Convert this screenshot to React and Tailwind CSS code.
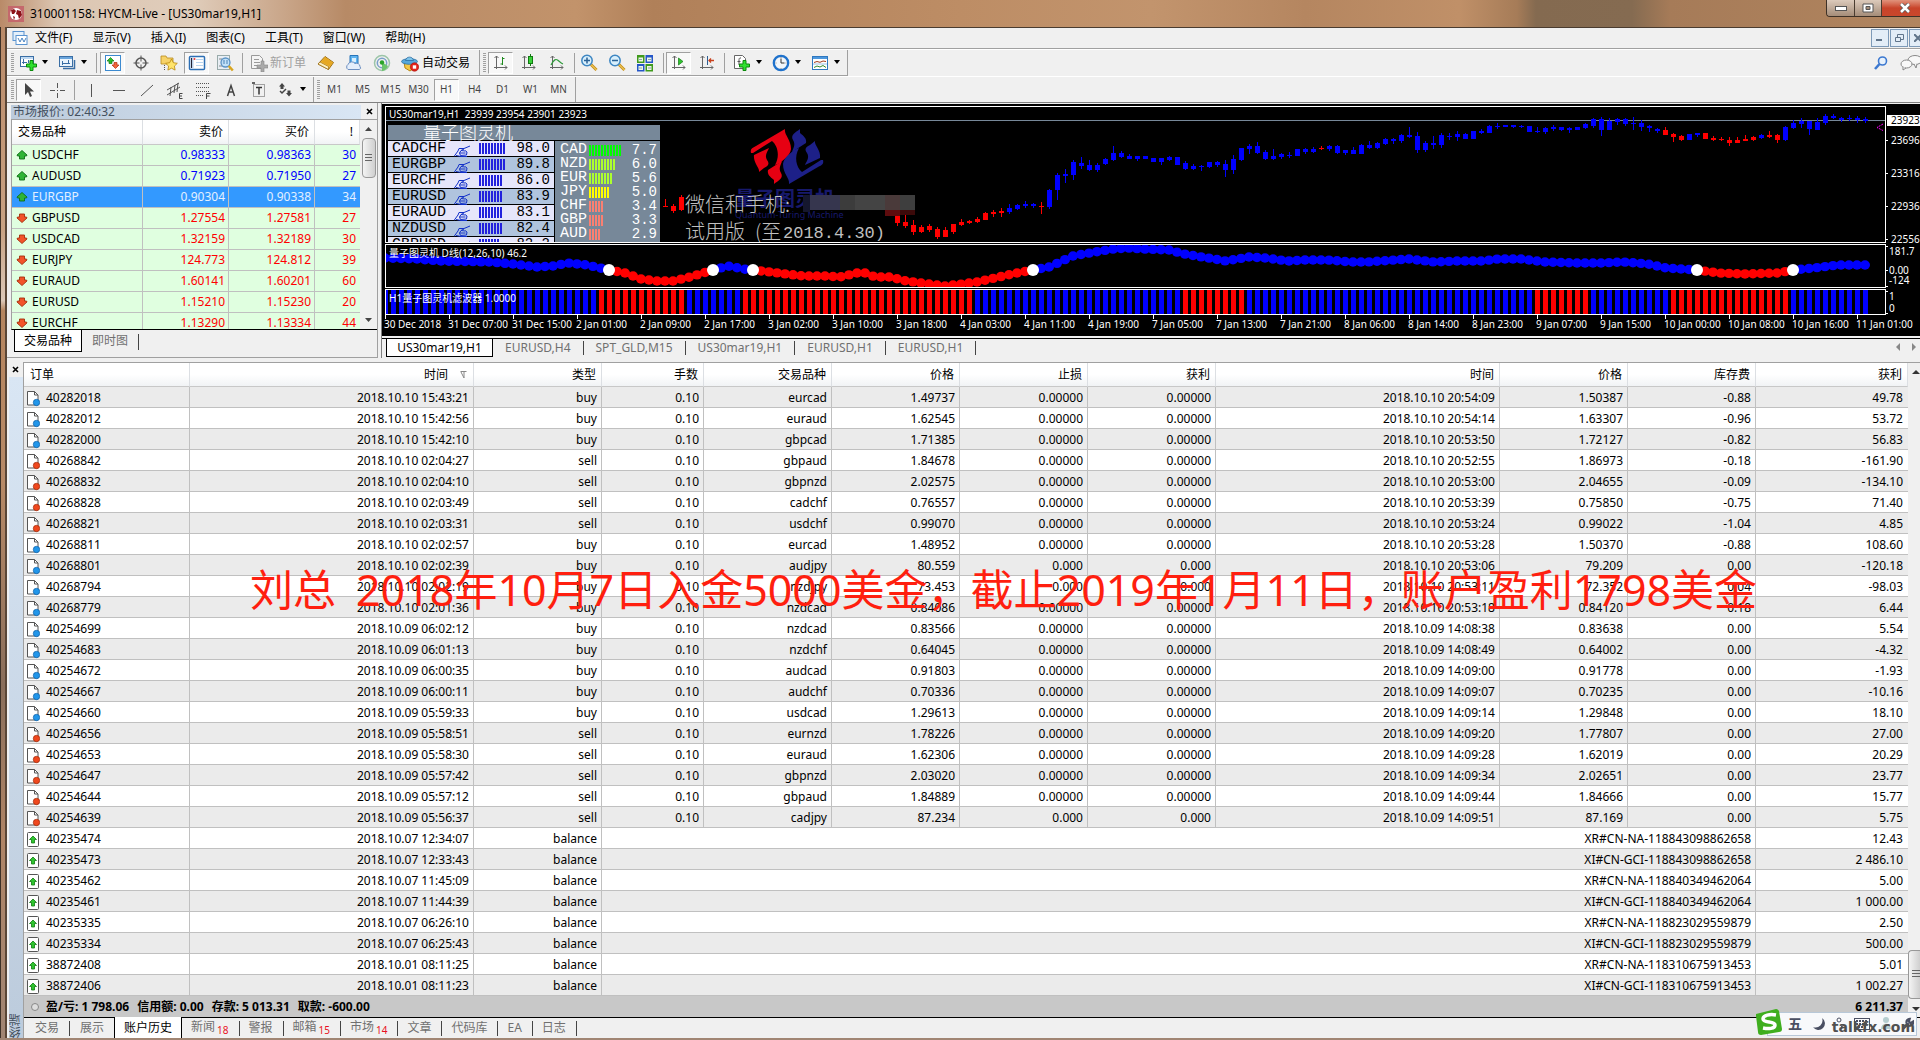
import React from "react";

const UI = "font-['Noto_Sans','Noto_Sans_CJK_SC',sans-serif]";

/* ---------- data ---------- */

const QUOTES = [
  ["USDCHF", "0.98333", "0.98363", "30", "up"],
  ["AUDUSD", "0.71923", "0.71950", "27", "up"],
  ["EURGBP", "0.90304", "0.90338", "34", "sel"],
  ["GBPUSD", "1.27554", "1.27581", "27", "down"],
  ["USDCAD", "1.32159", "1.32189", "30", "down"],
  ["EURJPY", "124.773", "124.812", "39", "down"],
  ["EURAUD", "1.60141", "1.60201", "60", "down"],
  ["EURUSD", "1.15210", "1.15230", "20", "down"],
  ["EURCHF", "1.13290", "1.13334", "44", "down"],
];

const TRADES = `40282018|2018.10.10 15:43:21|buy|eurcad|1.49737|0.00000|2018.10.10 20:54:09|1.50387|-0.88|49.78
40282012|2018.10.10 15:42:56|buy|euraud|1.62545|0.00000|2018.10.10 20:54:14|1.63307|-0.96|53.72
40282000|2018.10.10 15:42:10|buy|gbpcad|1.71385|0.00000|2018.10.10 20:53:50|1.72127|-0.82|56.83
40268842|2018.10.10 02:04:27|sell|gbpaud|1.84678|0.00000|2018.10.10 20:52:55|1.86973|-0.18|-161.90
40268832|2018.10.10 02:04:10|sell|gbpnzd|2.02575|0.00000|2018.10.10 20:53:00|2.04655|-0.09|-134.10
40268828|2018.10.10 02:03:49|sell|cadchf|0.76557|0.00000|2018.10.10 20:53:39|0.75850|-0.75|71.40
40268821|2018.10.10 02:03:31|sell|usdchf|0.99070|0.00000|2018.10.10 20:53:24|0.99022|-1.04|4.85
40268811|2018.10.10 02:02:57|buy|eurcad|1.48952|0.00000|2018.10.10 20:53:28|1.50370|-0.88|108.60
40268801|2018.10.10 02:02:39|buy|audjpy|80.559|0.000|2018.10.10 20:53:06|79.209|0.00|-120.18
40268794|2018.10.10 02:02:19|buy|nzdjpy|73.453|0.000|2018.10.10 20:53:11|72.352|0.04|-98.03
40268779|2018.10.10 02:01:36|buy|nzdcad|0.84086|0.00000|2018.10.10 20:53:18|0.84120|0.18|6.44
40254699|2018.10.09 06:02:12|buy|nzdcad|0.83566|0.00000|2018.10.09 14:08:38|0.83638|0.00|5.54
40254683|2018.10.09 06:01:13|buy|nzdchf|0.64045|0.00000|2018.10.09 14:08:49|0.64002|0.00|-4.32
40254672|2018.10.09 06:00:35|buy|audcad|0.91803|0.00000|2018.10.09 14:09:00|0.91778|0.00|-1.93
40254667|2018.10.09 06:00:11|buy|audchf|0.70336|0.00000|2018.10.09 14:09:07|0.70235|0.00|-10.16
40254660|2018.10.09 05:59:33|buy|usdcad|1.29613|0.00000|2018.10.09 14:09:14|1.29848|0.00|18.10
40254656|2018.10.09 05:58:51|sell|eurnzd|1.78226|0.00000|2018.10.09 14:09:20|1.77807|0.00|27.00
40254653|2018.10.09 05:58:30|sell|euraud|1.62306|0.00000|2018.10.09 14:09:28|1.62019|0.00|20.29
40254647|2018.10.09 05:57:42|sell|gbpnzd|2.03020|0.00000|2018.10.09 14:09:34|2.02651|0.00|23.77
40254644|2018.10.09 05:57:12|sell|gbpaud|1.84889|0.00000|2018.10.09 14:09:44|1.84666|0.00|15.77
40254639|2018.10.09 05:56:37|sell|cadjpy|87.234|0.000|2018.10.09 14:09:51|87.169|0.00|5.75`
  .split("\n")
  .map((l) => l.split("|"));

const BALANCES = [
  ["40235474", "2018.10.07 12:34:07", "XR#CN-NA-118843098862658", "12.43"],
  ["40235473", "2018.10.07 12:33:43", "XI#CN-GCI-118843098862658", "2 486.10"],
  ["40235462", "2018.10.07 11:45:09", "XR#CN-NA-118840349462064", "5.00"],
  ["40235461", "2018.10.07 11:44:39", "XI#CN-GCI-118840349462064", "1 000.00"],
  ["40235335", "2018.10.07 06:26:10", "XR#CN-NA-118823029559879", "2.50"],
  ["40235334", "2018.10.07 06:25:43", "XI#CN-GCI-118823029559879", "500.00"],
  ["38872408", "2018.10.01 08:11:25", "XR#CN-NA-118310675913453", "5.01"],
  ["38872406", "2018.10.01 08:11:23", "XI#CN-GCI-118310675913453", "1 002.27"],
];

/* candles: [body top, body bottom, wick top, wick bottom, colour] in thirds of a pixel */
const CANDLES = [
  [647, 669, 647, 678, "r"], [665, 678, 645, 684, "r"], [674, 696, 660, 704, "r"], [681, 696, 674, 699, "r"],
  [678, 690, 672, 696, "r"], [687, 711, 681, 717, "r"], [690, 711, 681, 711, "r"], [672, 696, 672, 702, "r"],
  [666, 675, 657, 678, "r"], [663, 669, 660, 672, "r"], [657, 666, 651, 669, "r"], [639, 660, 635, 660, "r"],
  [636, 642, 629, 651, "r"], [633, 639, 624, 651, "r"], [624, 636, 612, 642], [615, 627, 612, 629],
  [612, 618, 603, 624], [612, 618, 609, 624], [618, 621, 606, 642, "r"], [569, 621, 567, 627],
  [525, 569, 519, 599], [522, 528, 507, 549], [486, 525, 480, 539], [489, 498, 471, 507],
  [495, 510, 480, 513], [495, 510, 489, 516], [477, 492, 474, 495], [459, 480, 437, 484],
  [459, 471, 453, 474], [468, 477, 462, 477], [468, 477, 468, 483], [468, 477, 468, 477],
  [474, 486, 474, 486], [474, 486, 474, 495], [471, 480, 468, 483], [471, 495, 471, 495],
  [489, 507, 483, 510], [498, 507, 492, 510], [497, 500, 495, 513], [486, 501, 486, 504],
  [486, 495, 483, 501], [492, 510, 480, 531], [477, 510, 465, 522], [444, 480, 444, 483],
  [438, 447, 432, 462], [438, 459, 426, 462], [456, 477, 450, 480], [468, 477, 447, 480],
  [462, 471, 459, 477], [465, 468, 456, 474], [447, 468, 447, 468], [447, 456, 444, 462],
  [447, 456, 441, 459], [444, 447, 438, 450, "r"], [438, 447, 435, 453], [438, 459, 435, 462],
  [450, 459, 450, 465], [450, 462, 441, 462], [435, 462, 432, 462], [435, 444, 423, 447],
  [429, 444, 426, 447], [417, 432, 414, 435], [417, 423, 414, 432], [405, 423, 402, 429],
  [405, 411, 381, 414], [408, 450, 396, 459], [429, 450, 423, 456], [429, 435, 408, 447],
  [405, 435, 399, 444], [408, 411, 399, 420], [402, 411, 393, 423], [402, 417, 399, 417],
  [393, 417, 393, 417], [393, 399, 387, 402], [378, 399, 375, 399], [378, 381, 369, 387],
  [375, 381, 375, 381], [375, 381, 375, 384], [378, 381, 375, 384], [378, 396, 378, 396],
  [393, 396, 381, 399], [384, 396, 381, 402], [381, 387, 375, 393], [381, 390, 381, 393],
  [384, 390, 381, 399], [381, 390, 381, 390], [372, 384, 369, 387], [357, 378, 354, 384],
  [357, 390, 351, 408], [363, 390, 354, 390], [357, 366, 354, 375], [357, 372, 354, 378],
  [369, 372, 351, 390], [369, 381, 360, 393], [378, 384, 375, 396], [387, 393, 384, 399],
  [390, 405, 381, 405, "r"], [402, 411, 399, 426, "r"], [408, 420, 405, 423, "r"], [402, 420, 402, 420],
  [399, 405, 399, 411], [399, 417, 399, 417, "r"], [414, 420, 408, 423, "r"], [417, 420, 411, 423, "r"],
  [420, 429, 411, 438, "r"], [420, 429, 411, 429, "r"], [417, 423, 405, 423, "r"], [411, 420, 408, 423, "r"],
  [405, 414, 402, 417], [405, 411, 393, 414, "r"], [405, 420, 402, 429, "r"], [381, 420, 378, 423],
  [369, 384, 360, 387], [363, 372, 354, 384], [363, 387, 363, 405], [366, 390, 354, 390],
  [348, 369, 342, 375], [348, 354, 342, 357], [354, 360, 351, 366], [354, 357, 345, 363],
  [354, 360, 348, 369], [357, 363, 351, 369],
];

const CURVE = [
  [385, 258], [417, 259], [440, 261], [490, 262], [513, 264], [537, 267], [553, 266], [568, 263], [587, 265],
  [609, 270], [625, 273], [641, 279], [657, 281], [673, 281], [690, 277], [713, 270], [728, 266], [743, 269],
  [753, 270], [770, 272], [786, 274], [803, 276], [825, 276], [840, 277], [857, 273], [866, 273], [875, 277],
  [890, 277], [906, 281], [929, 284], [945, 286], [962, 284], [977, 282], [999, 277], [1017, 273], [1033, 270],
  [1049, 267], [1073, 256], [1095, 252], [1114, 249], [1128, 248], [1143, 249], [1169, 250], [1184, 254],
  [1202, 257], [1226, 261], [1249, 257], [1265, 258], [1288, 261], [1305, 260], [1328, 260], [1351, 262],
  [1367, 262], [1409, 259], [1434, 262], [1458, 261], [1482, 261], [1498, 259], [1521, 259], [1545, 262],
  [1577, 263], [1600, 263], [1624, 262], [1648, 264], [1666, 268], [1697, 270], [1719, 273], [1743, 274],
  [1778, 273], [1793, 270], [1814, 268], [1838, 265], [1866, 265],
];
const curveY = (x) => {
  for (let i = 1; i < CURVE.length; i++) {
    const [x0, y0] = CURVE[i - 1];
    const [x1, y1] = CURVE[i];
    if (x <= x1) return y0 + ((y1 - y0) * (x - x0)) / (x1 - x0);
  }
  return 265;
};
const SLOTS = Array.from({ length: 186 }, (_, i) => 385 + i * 8);
const within = (x, ranges) => ranges.some(([a, b]) => x >= a && x <= b);
const DOT_RED = [[610, 712], [754, 1032], [1698, 1792]];
const BAR_RED = [[601, 681], [745, 969], [1185, 1241], [1537, 1585], [1673, 1785]];
const TURNS = [609, 713, 753, 1033, 1697, 1793];
const DATES = [
  "30 Dec 2018", "31 Dec 07:00", "31 Dec 15:00", "2 Jan 01:00", "2 Jan 09:00", "2 Jan 17:00", "3 Jan 02:00",
  "3 Jan 10:00", "3 Jan 18:00", "4 Jan 03:00", "4 Jan 11:00", "4 Jan 19:00", "7 Jan 05:00", "7 Jan 13:00",
  "7 Jan 21:00", "8 Jan 06:00", "8 Jan 14:00", "8 Jan 23:00", "9 Jan 07:00", "9 Jan 15:00", "10 Jan 00:00",
  "10 Jan 08:00", "10 Jan 16:00", "11 Jan 01:00",
];

const PAIRS = [
  ["CADCHF", "98.0", 9], ["EURGBP", "89.8", 9], ["EURCHF", "86.0", 8], ["EURUSD", "83.9", 8],
  ["EURAUD", "83.1", 8], ["NZDUSD", "82.4", 8], ["GBPUSD", "82.2", 7],
];
const POWERS = [
  ["CAD", "7.7", 11, "bg-[#00ff00]"], ["NZD", "6.0", 9, "bg-[#adff2f]"], ["EUR", "5.6", 8, "bg-[#adff2f]"],
  ["JPY", "5.0", 7, "bg-[#ffff00]"], ["CHF", "3.4", 5, "bg-[#fa8072]"], ["GBP", "3.3", 5, "bg-[#fa8072]"],
  ["AUD", "2.9", 4, "bg-[#fa8072]"],
];

/* ---------- icons ---------- */

const Svg = ({ children, w = 18, h = 18, box }) => (
  <svg width={w} height={h} viewBox={box || `0 0 ${w} ${h}`} className="shrink-0" aria-hidden="true" fill="none">
    {children}
  </svg>
);
const Plus = ({ x, y }) => (
  <path
    transform={`translate(${x} ${y})`}
    d="M4 .5h3v3.500h3.500v3H7v3.500H4V7H.5V4H4z"
    fill="#2ee02e"
    stroke="#0a8a0a"
  />
);
const Axes = () => <path d="M4.500 2v13M2 13.500h13M2.500 4l2-2 2 2M13 11.500l2 2-2 2" stroke="#666" />;

const IconNewChart = () => (
  <Svg>
    <rect x="1.500" y="2.500" width="13" height="10" fill="#fff" stroke="#3a6ea5" />
    <path d="M2 4h12" stroke="#7fb2e5" />
    <path d="M4.500 5v5M3 8.500h5M9.500 6v3" stroke="#3a6ea5" />
    <Plus x={7} y={6} />
  </Svg>
);
const IconProfiles = () => (
  <Svg>
    <path d="M5 14.500h11.500V6" stroke="#3a6ea5" strokeWidth="1.500" />
    <rect x="1.500" y="2.500" width="13" height="10" fill="#eaf4fd" stroke="#3a6ea5" />
    <path d="M2 4h12" stroke="#6aa5dc" strokeWidth="2" />
    <path d="M4 9.500h8M4.500 7v4M10.500 6v4" stroke="#3a6ea5" />
  </Svg>
);
const IconMarket = () => (
  <Svg>
    <rect x="1.500" y="1.500" width="15" height="15" fill="#fff" stroke="#3c8ad0" />
    <path d="M3 7l3.500-3.500L10 7H8v2.500H5V7z" fill="#2bbd2b" stroke="#127a12" strokeWidth=".7" />
    <path d="M8 11l3.500 3.500L15 11h-2V8.500h-3V11z" fill="#f2663a" stroke="#b32c08" strokeWidth=".7" />
  </Svg>
);
const IconTarget = () => (
  <Svg>
    <circle cx="9" cy="9" r="5" stroke="#555" strokeWidth="1.500" />
    <path d="M9 1.500v6M9 10.500v6M1.500 9h6M10.500 9h6" stroke="#555" />
  </Svg>
);
const IconFavorites = () => (
  <Svg>
    <path d="M1 2h5l1 2h6v6H1z" fill="#f7d368" stroke="#b88a1d" strokeWidth=".8" />
    <path d="M4.500 11v6" stroke="#555" strokeDasharray="1 1" />
    <path d="M11.500 5l1.800 3.700 4 .6-2.900 2.800.7 4-3.600-1.900-3.600 1.900.7-4-2.900-2.800 4-.6z" fill="#ffe46b" stroke="#b8860b" strokeWidth=".8" />
  </Svg>
);
const IconNavigator = () => (
  <Svg>
    <rect x="1.500" y="2.500" width="15" height="13" rx="1" fill="#fff" stroke="#2d6fb5" strokeWidth="1.500" />
    <rect x="2.500" y="3.500" width="3" height="11" fill="#b9cfe8" />
    <path d="M3.500 4v10" stroke="#223" />
    <path d="M8 5.500h7M8 8.500h7M8 11.500h7" stroke="#b8d4ee" />
    <circle cx="6.500" cy="5" r="1" fill="#e33" />
  </Svg>
);
const IconTester = () => (
  <Svg>
    <rect x="1.500" y="1.500" width="12" height="14" fill="#e8eef4" stroke="#9aa" />
    <path d="M3 5h3v6M8 4v4M3 12h4" stroke="#888" />
    <circle cx="9.500" cy="8.500" r="4.500" fill="#bfe0fa" fillOpacity=".9" stroke="#5b93c5" strokeWidth="1.300" />
    <path d="M8 6v4M11 6v4" stroke="#4b83b5" />
    <path d="M12.800 12l4 4.500" stroke="#d8a520" strokeWidth="2.500" />
  </Svg>
);
const IconOrder = () => (
  <Svg>
    <path d="M1.500 1.500h8l3 3v10h-11z" fill="#f4f4f4" stroke="#999" />
    <path d="M4 5.500h5M4 8.500h6M4 11.500h3" stroke="#999" />
    <path d="M11 7h3v4h4v3h-4v4h-3v-4H7v-3h4z" fill="#aaa" stroke="#888" strokeWidth=".6" />
  </Svg>
);
const IconBook = () => (
  <Svg>
    <path d="M1 10l7-7.500 8.500 6-5 7z" fill="#f2c24b" stroke="#9a6a10" />
    <path d="M1 10l10.500 5.500v-3L3 8z" fill="#fff2c4" stroke="#9a6a10" strokeWidth=".7" />
    <path d="M8 3l8 5.500-3 4-9-4.500z" fill="#e6a823" />
  </Svg>
);
const IconCloud = () => (
  <Svg>
    <path d="M5 1.500h8v8H5z" fill="#5fb4f0" stroke="#2673b8" />
    <path d="M7 4h4v4H7z" fill="#d9effd" />
    <path d="M3 15.500a3 3 0 0 1 0-5 4 4 0 0 1 7-1 3.500 3.500 0 0 1 5 3 2 2 0 0 1-.5 3z" fill="#e4eefb" stroke="#6d8fc0" />
  </Svg>
);
const IconSignal = () => (
  <Svg>
    <circle cx="9" cy="9" r="7.500" stroke="#9cc5a8" strokeWidth="1.500" />
    <circle cx="9" cy="9" r="4.700" stroke="#7a9fc9" strokeWidth="1.500" />
    <path d="M9 8v9a8 8 0 0 0 6-5z" fill="#6cc46c" />
    <circle cx="9" cy="8.500" r="2.200" fill="#29a329" />
  </Svg>
);
const IconAuto = () => (
  <Svg>
    <path d="M3 8h11l-1 6-4 3-5-3z" fill="#f6c945" stroke="#b98612" />
    <ellipse cx="8.500" cy="7.500" rx="8" ry="2.800" fill="#58a8da" stroke="#2a6fa5" strokeWidth=".8" />
    <path d="M4.500 6.500C5 2 12 2 12.500 6.500z" fill="#7dc3ea" stroke="#2a6fa5" strokeWidth=".8" />
    <circle cx="13.500" cy="13" r="4.200" fill="#e2231a" stroke="#a50d06" strokeWidth=".6" />
    <rect x="11.800" y="11.300" width="3.400" height="3.400" fill="#fff" />
  </Svg>
);
const IconBars = () => (
  <Svg>
    <Axes />
    <path d="M10.500 3v8M10.500 4.500h2M8.500 10h2" stroke="#1f8a1f" />
  </Svg>
);
const IconCandles = () => (
  <Svg>
    <Axes />
    <path d="M10.500 0v12" stroke="#127a12" />
    <rect x="8.500" y="2.500" width="4" height="7" fill="#39d239" stroke="#127a12" />
  </Svg>
);
const IconLine = () => (
  <Svg>
    <Axes />
    <path d="M3 11c3-6 5-6 6.500-5s3 3 5.500 4" stroke="#2f9a3a" strokeWidth="1.200" />
  </Svg>
);
const IconZoom = ({ plus }) => (
  <Svg>
    <path d="M11 10.500l5.500 5.500" stroke="#c9921a" strokeWidth="3" />
    <path d="M11 10.500l5.500 5.500" stroke="#ffe17a" strokeWidth="1" />
    <circle cx="7" cy="6.500" r="5.200" fill="#d8effc" stroke="#3d86c2" strokeWidth="1.500" />
    <path d={plus ? "M4 6.500h6M7 3.500v6" : "M4 6.500h6"} stroke="#2a6296" strokeWidth="1.500" />
  </Svg>
);
const IconTile = () => (
  <Svg>
    <rect x="1" y="1" width="7.500" height="8" fill="#3f9a1c" />
    <rect x="9.500" y="1" width="7.500" height="8" fill="#2456c8" />
    <rect x="1" y="10" width="7.500" height="7.500" fill="#2456c8" />
    <rect x="9.500" y="10" width="7.500" height="7.500" fill="#3f9a1c" />
    <path d="M2.500 3.500h4.500v4H2.500zM11 3.500h4.500v4H11zM2.500 12h4.500v4H2.500zM11 12h4.500v4H11z" fill="#eef6e8" />
    <path d="M3 5.500h3M12 5.500h3M3 14h3M12 14h3" stroke="#8aa" />
  </Svg>
);
const IconScroll = () => (
  <Svg>
    <Axes />
    <path d="M8.500 4v7l4.500-3.500z" fill="#2fc42f" stroke="#127a12" strokeWidth=".7" />
  </Svg>
);
const IconShift = () => (
  <Svg>
    <Axes />
    <path d="M9.500 2v9" stroke="#2f5f92" />
    <path d="M16 6.500h-5M13 4.500l-2 2 2 2" stroke="#c8401c" strokeWidth="1.300" />
  </Svg>
);
const IconIndicators = () => (
  <Svg>
    <path d="M1.500 1.500h8l3 3v10h-11z" fill="#fff" stroke="#666" />
    <path d="M8 4C6 3.500 6 5 6 7v4M4.500 7.500h3" stroke="#555" />
    <Plus x={6} y={6} />
  </Svg>
);
const IconClock = () => (
  <Svg>
    <circle cx="9" cy="9" r="7.200" fill="#f2f6fa" stroke="#1f72cc" strokeWidth="2.300" />
    <path d="M9 4.500V9h3.500" stroke="#333" />
    <path d="M9 3v1M9 14v1M3.500 9h1M13.500 9h1" stroke="#888" />
  </Svg>
);
const IconTemplate = () => (
  <Svg>
    <rect x="1.500" y="2.500" width="15" height="13" fill="#fff" stroke="#2d78c0" />
    <rect x="2" y="3" width="14" height="2" fill="#4d97dd" />
    <path d="M3 8.500l3-1 3 .8 3-1.300 3 .5" stroke="#a33a1a" />
    <path d="M2 10h14" stroke="#9cc3e6" />
    <path d="M3 13.500l3-1.500 3 1 3-1.500 3 2" stroke="#2f8a2f" />
  </Svg>
);
const IconCursor = () => (
  <Svg>
    <path d="M5 2v12l3-3 2 5 2-1-2-4.500h4z" fill="#444" />
  </Svg>
);
const IconCross = () => (
  <Svg>
    <path d="M9.500 2v5M9.500 12v5M2 9.500h5M12 9.500h5M9 9.500h1" stroke="#555" />
  </Svg>
);
const IconV = () => <Svg><path d="M9.500 3v13" stroke="#555" /></Svg>;
const IconH = () => <Svg><path d="M3 9.500h12" stroke="#555" /></Svg>;
const IconTrend = () => <Svg><path d="M3 15L15 4" stroke="#555" /></Svg>;
const IconChannel = () => (
  <Svg>
    <path d="M1 9l12-7M1 14L14 6M5 6l-1 9M9 4l-1 8M12 2l-1 9" stroke="#555" />
    <path d="M16.500 12.500h-3v5h3M13.500 15h2.500" stroke="#444" />
  </Svg>
);
const IconFib = () => (
  <Svg>
    <path d="M2 2.500h13M2 6.500h13M2 10.500h13M2 14.500h8" stroke="#555" strokeDasharray="1 1" />
    <path d="M12.500 18v-5.500h4M12.500 15h3" stroke="#444" />
  </Svg>
);
const IconText = () => <Svg><path d="M5.500 15L9 4.500 12.500 15M6.500 11h5" stroke="#444" strokeWidth="1.500" /></Svg>;
const IconLabel = () => (
  <Svg>
    <rect x="3.500" y="3.500" width="11" height="12" stroke="#555" strokeDasharray="1 1" />
    <path d="M6 6.500h6M9 6.500v7M2 2h3" stroke="#333" strokeWidth="1.500" />
  </Svg>
);
const IconArrows = () => (
  <Svg>
    <path d="M2 5.500L5 2l3 3.500H6.500V8h-3V5.500zM9 12h1.500V9.500h3V12H15l-3 3.500z" fill="#444" />
    <path d="M3 10l2 2 4-4" stroke="#444" strokeWidth="1.500" />
  </Svg>
);

const QuoteArrow = ({ up }) => (
  <Svg w={12} h={12}>
    {up ? (
      <path d="M6 1.500l5 4.500-.5 1H8.500v3h-5V7h-2L1 6z" fill="#2fb536" stroke="#0e6e16" strokeWidth=".9" />
    ) : (
      <path d="M6 10.500L1 6l.5-1h2V2h5v3h2l.5 1z" fill="#f2542a" stroke="#a3300c" strokeWidth=".9" />
    )}
  </Svg>
);
const DocIcon = ({ sell }) => (
  <Svg w={14} h={17}>
    <path d="M1.500 1.500h7l3.500 3.500v10H1.500z" fill="#fff" stroke="#555" />
    <path d="M8.500 1.500V5H12" stroke="#555" />
    <circle cx="10.500" cy="12.500" r="3.200" fill={sell ? "#f0481e" : "#2196ea"} stroke={sell ? "#9c2a08" : "#0f5fa5"} strokeWidth=".7" />
  </Svg>
);
const BalanceIcon = () => (
  <Svg w={14} h={17}>
    <rect x="1.500" y="1.500" width="11" height="14" rx="1" fill="#fff" stroke="#555" />
    <path d="M7 5l3.500 3.500H8.500V12h-3V8.500h-2z" fill="#2fc52f" stroke="#0f7a0f" strokeWidth=".8" />
  </Svg>
);

/* ---------- small pieces ---------- */

const Caret = () => (
  <svg width="8" height="5" viewBox="0 0 8 5" aria-hidden="true"><path d="M1 0h6L4 4z" fill="#000" /></svg>
);
const Grip = () => (
  <span className="flex w-2 shrink-0 justify-center">
    <span className="h-5 w-[3px] bg-[repeating-linear-gradient(180deg,#a0a0a0_0_1px,#f0f0f0_1px_2px)]" />
  </span>
);
const Sep = () => (
  <span className="flex w-1 shrink-0 justify-center">
    <span className="h-5 w-px bg-[#a0a0a0]" />
  </span>
);
const Tool = ({ label, on, children }) => (
  <button
    aria-label={label}
    className={
      "mr-[3px] flex h-[22px] w-[25px] shrink-0 items-center justify-center border text-[10px] text-[#444] " +
      (on ? "border-white border-l-[#a0a0a0] border-t-[#a0a0a0] bg-[#f8f8f8]" : "border-transparent")
    }
  >
    {children}
  </button>
);
const Drop = ({ label, children }) => (
  <button aria-label={label} className="flex h-[22px] w-[39px] shrink-0 items-center gap-1 pl-[3px]">
    {children}
    <Caret />
  </button>
);
const CloseX = () => (
  <svg width="7" height="7" viewBox="0 0 7 7" aria-hidden="true"><path d="M1 1l5 5M6 1L1 6" stroke="#000" strokeWidth="1.600" /></svg>
);

function TitleBar() {
  return (
    <header className="flex h-[27px] shrink-0 items-center overflow-hidden bg-[linear-gradient(90deg,#b98a68_0,#dcc6b2_3%,#e0cdbb_10%,#c8a487_15%,#b78a66_18%,#c2936b_30%,#b08059_34%,#bd8d65_50%,#c2946d_60%,#b58660_68%,#c09068_76%,#a67c58_79%,#846a50_80%,#856b51_85%,#a67b58_87%,#b1855f_100%)]">
      <span className="ml-2 mt-px flex h-4 w-4 items-center justify-center bg-[#c4686c]">
        <svg width="14" height="14" viewBox="0 0 14 14" aria-hidden="true">
          <circle cx="7" cy="7" r="6" fill="#fff" />
          <path d="M2 3l3-1 2 2-2 3-2 0zM8 3l4 1 1 4-3 4-1-4-2-1zM4 9l2 1-1 3z" fill="#8c1218" />
        </svg>
      </span>
      <h1 className="ml-[6px] text-[12px] text-black">310001158: HYCM-Live - [US30mar19,H1]</h1>
      <div className="ml-auto flex h-[17px] self-start overflow-hidden rounded-bl border border-t-0 border-r-0 border-[#3d3127]">
        <button aria-label="最小化" className="flex w-7 items-center justify-center border-r border-[#4a3c30] bg-gradient-to-b from-[#dccabb] to-[#a58d79]">
          <svg width="12" height="5" viewBox="0 0 12 5"><rect x=".5" y=".5" width="11" height="4" fill="#fff" stroke="#555" /></svg>
        </button>
        <button aria-label="还原" className="flex w-[27px] items-center justify-center border-r border-[#4a3c30] bg-gradient-to-b from-[#dccabb] to-[#a58d79]">
          <svg width="12" height="10" viewBox="0 0 12 10"><path d="M1 1h10v8H1z" fill="#fff" stroke="#555" /><path d="M4 3.500h4v3H4z" fill="#a58d79" stroke="#555" /></svg>
        </button>
        <button aria-label="关闭" className="flex w-[38px] items-center bg-gradient-to-b from-[#e0927c] via-[#c8432a] to-[#c9472c] pl-[17px]">
          <svg width="12" height="10" viewBox="0 0 12 10"><path d="M2 1l8 8M10 1L2 9" stroke="#555" strokeWidth="4" /><path d="M2 1l8 8M10 1L2 9" stroke="#fff" strokeWidth="2.500" /></svg>
        </button>
      </div>
    </header>
  );
}

function MenuBar() {
  return (
    <nav className="flex h-[21px] shrink-0 items-center border-b border-[#a0a0a0] pl-[5px]">
      <svg width="16" height="15" viewBox="0 0 16 15" className="mr-[7px]" aria-hidden="true">
        <rect x="1" y=".5" width="11" height="9" fill="#e4f0fb" stroke="#5a93d0" />
        <rect x="4" y="4.500" width="11" height="9" fill="#fff" stroke="#5a93d0" />
        <path d="M6 7l2 4 2-4 2 4 2-4" stroke="#4a83c0" fill="none" />
      </svg>
      <div className="flex flex-1 gap-5 text-[12px]">
        {["文件(F)", "显示(V)", "插入(I)", "图表(C)", "工具(T)", "窗口(W)", "帮助(H)"].map((m) => (
          <button key={m}>{m}</button>
        ))}
      </div>
      <div className="flex gap-px">
        <button aria-label="最小化图表" className="flex h-[18px] w-[18px] items-end border border-[#7d9ab8] bg-[#e3edf7] pb-[5px] pl-1">
          <span className="h-[2px] w-[6px] bg-[#60748a]" />
        </button>
        <button aria-label="还原图表" className="flex h-[18px] w-[18px] items-center justify-center border border-[#7d9ab8] bg-[#e3edf7]">
          <svg width="9" height="9" viewBox="0 0 9 9" fill="none" stroke="#60748a"><path d="M2.500 3V.5h6v5H6" /><path d="M.5 3.500h5v4h-5z" /></svg>
        </button>
        <button aria-label="关闭图表" className="flex h-[18px] w-[11px] items-center border border-r-0 border-[#7d9ab8] bg-[#e3edf7] pl-1">
          <svg width="6" height="8" viewBox="0 0 6 8"><path d="M0 0l7 7M7 1L0 8" stroke="#60748a" strokeWidth="2" /></svg>
        </button>
      </div>
    </nav>
  );
}

function Toolbars() {
  return (
    <>
      <div className="flex h-[27px] shrink-0 items-center justify-between border-t border-white">
        <div className="flex h-full items-center border-b border-r border-[#a0a0a0] pl-px">
          <Grip />
          <Drop label="新图表"><IconNewChart /></Drop>
          <Drop label="配置文件"><IconProfiles /></Drop>
          <Sep />
          <span className="w-[2px]" />
          <Tool label="市场报价" on><IconMarket /></Tool>
          <Tool label="数据窗口"><IconTarget /></Tool>
          <Tool label="导航"><IconFavorites /></Tool>
          <Tool label="终端" on><IconNavigator /></Tool>
          <Tool label="策略测试"><IconTester /></Tool>
          <Sep />
          <button className="flex h-[22px] w-[69px] items-center gap-[2px] pl-[6px] text-[12px] text-[#a0a0a0]">
            <IconOrder />新订单
          </button>
          <Tool label="编辑器"><IconBook /></Tool>
          <Tool label="云"><IconCloud /></Tool>
          <Tool label="信号"><IconSignal /></Tool>
          <button className="flex h-[22px] w-[82px] items-center gap-[3px] pl-[4px] text-[12px]">
            <IconAuto />自动交易
          </button>
          <span className="h-full w-px bg-[#a0a0a0]" />
          <Grip />
          <Tool label="柱状图" on><IconBars /></Tool>
          <Tool label="蜡烛图"><IconCandles /></Tool>
          <Tool label="折线图"><IconLine /></Tool>
          <Sep />
          <Tool label="放大"><IconZoom plus /></Tool>
          <Tool label="缩小"><IconZoom /></Tool>
          <Tool label="平铺窗口"><IconTile /></Tool>
          <span className="w-px" />
          <Sep />
          <span className="w-px" />
          <Tool label="自动滚动" on><IconScroll /></Tool>
          <Tool label="图表平移"><IconShift /></Tool>
          <Sep />
          <span className="w-1" />
          <Drop label="技术指标"><IconIndicators /></Drop>
          <Drop label="时间周期"><IconClock /></Drop>
          <Drop label="模板"><IconTemplate /></Drop>
        </div>
        <div className="flex items-center gap-3">
          <button aria-label="搜索">
            <svg width="14" height="14" viewBox="0 0 14 14" fill="none"><circle cx="8.500" cy="5" r="4" fill="#e8f2fc" stroke="#3c78d0" strokeWidth="1.600" /><path d="M5.500 8L1 13" stroke="#3c78d0" strokeWidth="2.600" /></svg>
          </button>
          <button aria-label="社区">
            <svg width="20" height="16" viewBox="0 0 20 16" fill="#f8f8f8" stroke="#888"><ellipse cx="15" cy="5" rx="7" ry="4.500" /><path d="M14 9l2 4 1-4" /><ellipse cx="6.500" cy="9" rx="5.500" ry="4" /><path d="M3 12l0 3 3-2" /></svg>
          </button>
        </div>
      </div>
      <div className="flex h-[27px] shrink-0 items-center border-b border-t border-b-[#808080] border-t-white pl-px">
        <Grip />
        <Tool label="光标" on><IconCursor /></Tool>
        <Tool label="十字准线"><IconCross /></Tool>
        <Sep />
        <span className="w-[2px]" />
        <Tool label="垂直线"><IconV /></Tool>
        <Tool label="水平线"><IconH /></Tool>
        <Tool label="趋势线"><IconTrend /></Tool>
        <Tool label="等距通道"><IconChannel /></Tool>
        <Tool label="斐波那契"><IconFib /></Tool>
        <Tool label="文字"><IconText /></Tool>
        <Tool label="文字标签"><IconLabel /></Tool>
        <Drop label="箭头"><IconArrows /></Drop>
        <span className="h-full w-px bg-[#a0a0a0]" />
        <Grip />
        {["M1", "M5", "M15", "M30", "H1", "H4", "D1", "W1", "MN"].map((t) => (
          <Tool key={t} label={t} on={t === "H1"}>{t}</Tool>
        ))}
        <span className="ml-px h-full w-px bg-[#a0a0a0]" />
      </div>
    </>
  );
}

const headCell = "border-r border-[#dcdfe3] bg-gradient-to-b from-white from-50% to-[#f1f3f5] font-normal";

function MarketWatch() {
  return (
    <section className="flex w-[371px] shrink-0 flex-col border-b border-r border-[#a0a0a0] pl-1">
      <div className="flex h-4 items-center gap-[5px] pt-px">
        <h2 className="h-[14px] flex-1 bg-gradient-to-r from-[#bccbdc] to-[#d9e6f4] pl-[2px] text-[12px] leading-[14px] text-[#44505e]">
          市场报价: 02:40:32
        </h2>
        <button aria-label="关闭市场报价" className="mr-1"><CloseX /></button>
      </div>
      <div className="flex h-[211px] overflow-hidden border-l border-t border-[#a0a0a0] border-b border-b-black">
        <table className="w-[348px] table-fixed border-separate border-spacing-0 self-start text-[12px]">
          <colgroup>
            <col className="w-[131px]" /><col className="w-[86px]" /><col className="w-[86px]" /><col className="w-[45px]" />
          </colgroup>
          <thead>
            <tr className="h-[25px]">
              <th className={headCell + " border-b border-b-[#c8c8c8] pl-[6px] text-left"}>交易品种</th>
              <th className={headCell + " border-b border-b-[#c8c8c8] pr-[5px] text-right"}>卖价</th>
              <th className={headCell + " border-b border-b-[#c8c8c8] pr-[5px] text-right"}>买价</th>
              <th className={headCell + " border-b border-b-[#c8c8c8] pr-[6px] text-right"}>!</th>
            </tr>
          </thead>
          <tbody>
            {QUOTES.map(([s, a, b, sp, st]) => {
              const tone = st === "sel" ? "text-[#e4f0ff]" : st === "up" ? "text-[#0000ff]" : "text-[#ff0000]";
              const cell = "border-b border-r border-[#c0c0c0] py-0 text-right leading-5 " + tone;
              return (
                <tr key={s} className={st === "sel" ? "h-[21px] bg-[#3399ff]" : "h-[21px] bg-[#e0ffe0]"}>
                  <td className={"border-b border-r border-[#c0c0c0] py-0 pl-1 leading-5 " + (st === "sel" ? "text-[#e4f0ff]" : "text-black")}>
                    <span className="flex items-center gap-[4px]"><QuoteArrow up={st !== "down"} />{s}</span>
                  </td>
                  <td className={cell + " pr-[3px]"}>{a}</td>
                  <td className={cell + " pr-[3px]"}>{b}</td>
                  <td className={cell + " border-r-0 pr-[4px]"}>{sp}</td>
                </tr>
              );
            })}
          </tbody>
        </table>
        <div className="flex flex-1 flex-col items-center bg-[#f0f0f0] py-[7px]">
          <svg width="7" height="4" viewBox="0 0 7 4"><path d="M0 4h7L3.500 0z" fill="#444" /></svg>
          <span className="mt-[7px] flex h-[40px] w-[14px] items-center justify-center rounded-sm border border-[#989898] bg-gradient-to-r from-[#f4f4f4] to-[#cfcfcf]">
            <span className="h-[8px] w-[7px] bg-[repeating-linear-gradient(180deg,#666_0_1px,transparent_1px_3px)]" />
          </span>
          <svg width="7" height="4" viewBox="0 0 7 4" className="mt-auto"><path d="M0 0h7L3.500 4z" fill="#444" /></svg>
        </div>
      </div>
      <div className="flex items-start text-[12px]">
        <button className="ml-[3px] h-[22px] w-[68px] border border-t-0 border-black bg-white text-black">交易品种</button>
        <button className="h-[22px] w-[56px] text-[#707070]">即时图</button>
        <span className="mt-1 h-4 w-px bg-[#444]" />
      </div>
    </section>
  );
}

function Hand() {
  return (
    <svg width="17" height="12" viewBox="0 0 17 12" fill="none" stroke="#1230c8" aria-hidden="true">
      <path d="M0 11.500L4 6l1-2.500h5L16 1M10 4l-3 1.500 4 .5M7 5.500L5.500 8l6 0M5.500 8l1 2.500 6-.5.500-3-2-1.500M2 10.500l5 1 6 0" />
    </svg>
  );
}

function StrengthPanel() {
  return (
    <div className="absolute left-[6px] top-[22px] flex h-[117px] w-[272px] flex-col overflow-hidden text-[15px]">
      <div className="h-[15px] shrink-0 bg-[#778899] pl-[35px] font-['Noto_Sans_CJK_SC',sans-serif] text-[18px] font-light leading-[12px] text-white">量子图灵机</div>
      <div className="flex pt-px font-['Liberation_Mono',monospace]">
        <div className="w-[166px] shrink-0">
          {PAIRS.map(([p, v, n], i) => (
            <div
              key={p}
              className={"mb-px flex h-[15px] items-center leading-[15px] text-black " + (i % 2 ? "bg-[#b0c4de]" : "bg-[#e6e6fa]")}
            >
              <span className="w-[66px] pl-[4px]">{p}</span>
              <span className="w-[25px] pt-1"><Hand /></span>
              <span className="flex flex-1 gap-px">
                {Array.from({ length: n }, (_, k) => <span key={k} className="h-[11px] w-[2px] bg-[#2222dd]" />)}
              </span>
              <span className="pr-[4px] text-[14px]">{v}</span>
            </div>
          ))}
        </div>
        <div className="ml-px h-[101px] flex-1 bg-[#778899] pt-[2px] text-white">
          {POWERS.map(([c, v, n, tone]) => (
            <div key={c} className="flex h-[14px] items-center leading-[14px]">
              <span className="w-[34px] pl-[5px]">{c}</span>
              <span className="flex flex-1 gap-px">
                {Array.from({ length: n }, (_, k) => <span key={k} className={"h-[11px] w-[2px] " + tone} />)}
              </span>
              <span className="pr-[3px] text-[14px]">{v}</span>
            </div>
          ))}
        </div>
      </div>
    </div>
  );
}

function LogoHalf() {
  return (
    <>
      <path d="M751 153C750 149 752 148 756 146L785 129C784 135 791 139 791 149C790 156 783 160 780 163L775 165C780 156 778 146 772 141L753 153Z" />
      <path d="M754 155L769 148C768 151 764 155 767 160C770 164 768 166 764 168L759 172C760 168 753 163 754 155Z" />
      <path d="M768 170L782 161C781 165 778 168 781 173C784 178 778 181 774 184L774 180C770 177 767 174 768 170Z" />
    </>
  );
}

function ChartDrawing() {
  return (
    <svg viewBox="382 104 1538 232" preserveAspectRatio="xMinYMin slice" className="block h-[232px] w-full bg-black">
      <g fill="#e60012"><LogoHalf /></g>
      <g fill="#1d2088" transform="rotate(180 787 156.5)"><LogoHalf /></g>
      <text x="735" y="206" fontSize="20" fontWeight="700" fill="#17196c" className="font-['Noto_Sans_CJK_SC',sans-serif]">量子图灵机</text>
      <text x="735" y="218" fontSize="9" fill="#17196c" className="font-['Noto_Sans',sans-serif]">Quantum-Turing Machine</text>
      <g fill="#c0c0c0" className="font-['Noto_Sans_CJK_SC',sans-serif]" fontSize="20" fontWeight="300">
        <text x="685" y="212">微信和手机:</text>
        <text x="685" y="239">试用版</text>
        <text x="755" y="239">(至</text>
        <text x="783" y="238" fontSize="17" className="font-['Liberation_Mono',monospace]">2018.4.30)</text>
      </g>
      <path d="M385 120.500H1885" stroke="#778899" />
      {[[665, 206, 207, 199, 207], [673, 206, 211, 204, 213], [681, 197, 210, 195, 211]].map(([x, a, b, c, d]) => (
        <g key={x} fill="#f00">
          <rect x={x - 2} y={a} width="5" height={b - a} />
          <rect x={x} y={c} width="1" height={d - c} />
        </g>
      ))}
      <g shapeRendering="crispEdges">
        {CANDLES.map(([t, b, wt, wb, c], i) => {
          const x = 897 + i * 8;
          const y0 = Math.round(t / 3);
          const y1 = Math.round(b / 3);
          return (
            <g key={x} fill={c ? "#ff0000" : "#0000ff"}>
              <rect x={x - 2} y={y0} width="5" height={Math.max(1, y1 - y0)} />
              <rect x={x} y={Math.round(wt / 3)} width="1" height={Math.round(wb / 3) - Math.round(wt / 3)} />
            </g>
          );
        })}
      </g>
      <rect x="803" y="195" width="7" height="17" fill="#15172e" />
      <rect x="810" y="195" width="30" height="15" fill="#36364e" />
      <rect x="840" y="195" width="15" height="15" fill="#3c3c3c" />
      <rect x="855" y="195" width="30" height="15" fill="#444" />
      <rect x="885" y="195" width="15" height="15" fill="#4a3a3a" />
      <rect x="900" y="195" width="15" height="15" fill="#3e3e3e" />
      <rect x="885" y="210" width="15" height="6" fill="#5e0c0e" />
      <rect x="900" y="210" width="15" height="5" fill="#3c0a0a" />
      <path d="M1883 124l-6 3.500 6 3" stroke="#ff00ff" fill="none" strokeDasharray="2 1" />

      {SLOTS.map((x) => (
        <ellipse key={x} cx={x} cy={curveY(x)} rx="5" ry="4.700" fill={within(x, DOT_RED) ? "#ff0000" : "#0000ff"} />
      ))}
      {TURNS.map((x) => <circle key={x} cx={x} cy="270" r="6" fill="#fff" />)}
      <g shapeRendering="crispEdges">
        {SLOTS.map((x) => (
          <rect key={x} x={x - 2} y="290" width="5" height="24" fill={within(x, BAR_RED) ? "#ff0000" : "#0000ff"} />
        ))}
      </g>
      <path d="M382 243h1538v1H382zM382 288h1538v1H382zM382 104h3v232h-3z" fill="#000" />
      <g fill="none" stroke="#fff" shapeRendering="crispEdges">
        <rect x="385.500" y="106.500" width="1500" height="136" />
        <rect x="385.500" y="244.500" width="1500" height="43" />
        <rect x="385.500" y="289.500" width="1500" height="25" />
        {DATES.map((d, i) => <path key={d} d={`M${385.5 + i * 64} 315v4`} />)}
        {[140.5, 173.5, 206.5, 239.5, 246.5, 270.5, 286.5, 291.5, 313.5].map((y) => <path key={y} d={`M1886 ${y}h2`} />)}
      </g>
      <g fill="#fff" fontSize="10" className="font-['Noto_Sans','Noto_Sans_CJK_SC',sans-serif]">
        <text x="389" y="118">US30mar19,H1&#160;&#160;23939 23954 23901 23923</text>
        <text x="389" y="257">量子图灵机 D线(12,26,10) 46.2</text>
        <text x="389" y="302">H1量子图灵机滤波器 1.0000</text>
        {DATES.map((d, i) => <text key={d} x={384 + i * 64} y="328">{d}</text>)}
        <text x="1891" y="144">23696</text>
        <text x="1891" y="177">23316</text>
        <text x="1891" y="210">22936</text>
        <text x="1891" y="243">22556</text>
        <text x="1889" y="255">181.7</text>
        <text x="1889" y="274">0.00</text>
        <text x="1889" y="284">-124</text>
        <text x="1889" y="300">1</text>
        <text x="1889" y="312">0</text>
        <rect x="1887" y="115" width="33" height="11" />
        <text x="1891" y="124" fill="#000">23923</text>
      </g>
    </svg>
  );
}

function ChartWindow() {
  const tabs = ["EURUSD,H4", "SPT_GLD,M15", "US30mar19,H1", "EURUSD,H1", "EURUSD,H1"];
  return (
    <section className="ml-[3px] flex min-w-0 flex-1 flex-col border-l border-[#808080]">
      <div className="relative pt-px">
        <ChartDrawing />
        <StrengthPanel />
      </div>
      <div className="mt-[2px] flex items-start border-t border-black text-[12px] text-[#707070]">
        <button className="ml-1 h-[18px] w-[107px] border border-t-0 border-black bg-white text-black">US30mar19,H1</button>
        {tabs.map((t, i) => (
          <React.Fragment key={i}>
            <button className="h-[18px] px-3">{t}</button>
            <span className="mt-[2px] h-[14px] w-px bg-[#444]" />
          </React.Fragment>
        ))}
        <span className="ml-auto mt-1 flex gap-[12px] pr-1">
          <svg width="4" height="8" viewBox="0 0 4 8"><path d="M4 0v8L0 4z" fill="#888" /></svg>
          <svg width="4" height="8" viewBox="0 0 4 8"><path d="M0 0v8l4-4z" fill="#888" /></svg>
        </span>
      </div>
    </section>
  );
}

const COLS = [
  "w-[166px]", "w-[284px]", "w-[128px]", "w-[102px]", "w-[128px]", "w-[128px]", "w-[128px]", "w-[128px]",
  "w-[284px]", "w-[128px]", "w-[128px]", "w-[152px]",
];
const HEADS = ["订单", "时间", "类型", "手数", "交易品种", "价格", "止损", "获利", "时间", "价格", "库存费", "获利"];
const td = "border-b border-r border-[#c0c0c0] pb-0 pt-[2px] pl-0 pr-1 text-right leading-[18px]";
const tdLast = "border-b border-[#c0c0c0] pb-0 pt-[2px] pl-0 pr-[5px] text-right leading-[18px]";

function OrderCell({ icon, id }) {
  return (
    <td className="border-b border-r border-[#c0c0c0] pb-0 pl-[2px] pt-[2px] leading-[18px]">
      <span className="flex items-center gap-[6px]">{icon}{id}</span>
    </td>
  );
}

function Terminal() {
  const tabs = [["交易"], ["展示"], ["账户历史"], ["新闻", "18"], ["警报"], ["邮箱", "15"], ["市场", "14"], ["文章"], ["代码库"], ["EA"], ["日志"]];
  return (
    <section className="relative flex flex-1 pt-px">
      <div className="flex w-4 shrink-0 flex-col items-center pl-px">
        <button aria-label="关闭终端" className="mt-[2px] flex h-[11px] items-center"><CloseX /></button>
        <div className="mt-[2px] flex w-[14px] flex-1 items-end justify-center overflow-hidden bg-gradient-to-b from-[#d9e6f4] to-[#bccbdc]">
          <span className="text-[12px] leading-[14px] text-[#44505e] [writing-mode:vertical-rl] rotate-180">终端</span>
        </div>
      </div>
      <div className="flex min-w-0 flex-1 flex-col border-t border-l border-[#a0a0a0]">
        <div className="flex">
          <div className="min-w-0 flex-1">
            <table className="w-full table-fixed border-separate border-spacing-0 text-[12px]">
              <colgroup>{COLS.map((c, i) => <col key={i} className={c} />)}</colgroup>
              <thead>
                <tr className="h-[24px]">
                  {HEADS.map((h, i) => (
                    <th
                      key={i}
                      className={headCell + " border-b border-b-[#c8c8c8] py-0 " + (i ? "pr-[5px] text-right" : "pl-[6px] text-left")}
                    >
                      {i === 1 ? (
                        <span className="flex items-center justify-end gap-3">
                          {h}
                          <svg width="8" height="8" viewBox="0 0 8 8" fill="none"><path d="M.5.5h6M1 1l3 6V1" stroke="#888" /></svg>
                        </span>
                      ) : h}
                    </th>
                  ))}
                </tr>
              </thead>
              <tbody>
                {TRADES.map(([id, t, type, sym, p, sl, t2, p2, sw, pr], i) => (
                  <tr key={id} className={i % 2 ? "h-[21px] bg-white" : "h-[21px] bg-[#ebebeb]"}>
                    <OrderCell icon={<DocIcon sell={type === "sell"} />} id={id} />
                    <td className={td}>{t}</td>
                    <td className={td}>{type}</td>
                    <td className={td}>0.10</td>
                    <td className={td}>{sym}</td>
                    <td className={td}>{p}</td>
                    <td className={td}>{sl}</td>
                    <td className={td}>{sl}</td>
                    <td className={td}>{t2}</td>
                    <td className={td}>{p2}</td>
                    <td className={td}>{sw}</td>
                    <td className={tdLast}>{pr}</td>
                  </tr>
                ))}
                {BALANCES.map(([id, t, note, pr], i) => (
                  <tr key={id} className={i % 2 ? "h-[21px] bg-[#ebebeb]" : "h-[21px] bg-white"}>
                    <OrderCell icon={<BalanceIcon />} id={id} />
                    <td className={td}>{t}</td>
                    <td className={td}>balance</td>
                    <td className={td} colSpan={8}>{note}</td>
                    <td className={tdLast}>{pr}</td>
                  </tr>
                ))}
              </tbody>
            </table>
            <div className="flex h-[21px] items-center bg-[#c8c8c8] pr-[5px] text-[12px] font-bold">
              <span className="ml-[7px] mr-[7px] flex h-2 w-2 items-center justify-center rounded-full border border-[#888] bg-[#ddd]" />
              <span className="flex flex-1 gap-2">
                <span>盈/亏: 1 798.06</span>
                <span>信用额: 0.00</span>
                <span>存款: 5 013.31</span>
                <span>取款: -600.00</span>
              </span>
              <span>6 211.37</span>
            </div>
          </div>
          <div className="flex w-3 shrink-0 flex-col items-end overflow-hidden bg-[#f0f0f0] pb-[6px] pt-[7px]">
            <svg width="8" height="4" viewBox="0 0 8 4"><path d="M0 4h8L4 0z" fill="#333" /></svg>
            <span className="mt-auto flex h-[49px] w-3 items-center justify-end rounded-l-sm border border-r-0 border-[#989898] bg-gradient-to-r from-[#f4f4f4] to-[#cfcfcf]">
              <span className="h-[9px] w-2 bg-[repeating-linear-gradient(180deg,#666_0_1px,transparent_1px_3px)]" />
            </span>
            <svg width="8" height="4" viewBox="0 0 8 4" className="mt-2"><path d="M0 0h8L4 4z" fill="#333" /></svg>
          </div>
        </div>
        <div className="flex h-[21px] border-t border-black pl-px text-[12px] text-[#707070]">
          {tabs.map(([t, n], i) =>
            i === 2 ? (
              <button key={t} className="-mt-px w-[68px] border-x border-black bg-white text-black">{t}</button>
            ) : (
              <span key={t} className="flex items-center">
                <button className={"flex " + (i < 2 ? "px-[10px]" : "pl-[9px] pr-[10px]")}>
                  {t}
                  {n && <span className="ml-[2px] mt-1 text-[10px] leading-4 text-[#e81123]">{n}</span>}
                </button>
                {i !== 1 && <span className="h-[15px] w-px bg-[#444]" />}
              </span>
            )
          )}
        </div>
      </div>
      <p className="pointer-events-none absolute left-[243px] top-[197px] flex gap-5 whitespace-nowrap text-[43px] leading-[64px] text-[#ff1f0f]">
        <span>刘总</span>
        <span>2018年10月7日入金5000美金，截止2019年1月11日，账户盈利1798美金</span>
      </p>
      <div className="absolute bottom-[2px] right-[3px] flex items-end">
        <svg width="28" height="28" viewBox="0 0 28 28" className="z-10 -mr-4" aria-hidden="true">
          <path d="M1 6L21 1c2 0 2 1 3 2l3 18c0 2-1 3-3 3L6 27c-2 0-3-1-3-3L1 8z" fill="#3fae1e" />
          <path d="M21 7c-6-1-13 0-13 4s12 2 12 6-7 4-12 3" fill="none" stroke="#fff" strokeWidth="3.500" />
        </svg>
        <div className="relative flex h-[24px] w-[150px] items-center gap-[10px] border border-[#b8c8d8] bg-[#f8f9fb] pl-[20px] text-[#4a4f62]">
          <span className="text-[14px] font-bold leading-5">五</span>
          <svg width="14" height="14" viewBox="0 0 14 14" aria-hidden="true"><path d="M10 1a7 7 0 0 1-9 9 6.500 6.500 0 1 0 9-9z" fill="#4a4f62" /></svg>
          <svg width="8" height="14" viewBox="0 0 8 14" aria-hidden="true"><circle cx="3" cy="3" r="2" fill="none" stroke="#4a4f62" /><path d="M5 9h2l-2 4z" fill="#4a4f62" /></svg>
          <svg width="16" height="12" viewBox="0 0 16 12" aria-hidden="true"><rect x=".5" y=".5" width="15" height="11" fill="none" stroke="#4a4f62" /><path d="M2 3h12M2 6h12M4 9h8" stroke="#4a4f62" strokeWidth="2" strokeDasharray="2 1" /></svg>
          <svg width="12" height="14" viewBox="0 0 12 14" aria-hidden="true"><circle cx="6" cy="3" r="3" fill="#b6ced0" /><path d="M1 12c0-7 10-7 10 0z" fill="#b6ced0" /></svg>
          <svg width="12" height="14" viewBox="0 0 14 14" aria-hidden="true"><path d="M1 13l7-7M13 4a4 4 0 1 1-4-3l-1 3 2 2z" stroke="#4a4f62" strokeWidth="2.500" fill="none" /></svg>
          <span className="absolute bottom-0 right-[1px] font-['DejaVu_Sans',sans-serif] text-[14px] font-bold leading-4 text-[#505050]">talkfx.com</span>
        </div>
      </div>
    </section>
  );
}

export default function App() {
  return (
    <div className={UI + " flex min-h-screen flex-col overflow-hidden bg-[#b98a66] text-black"}>
      <TitleBar />
      <div className="flex flex-1 bg-[linear-gradient(180deg,#b98a68_0,#c9a283_20%,#dcc8b8_27%,#b5855f_28%,#b88a66_45%,#8a6e5a_65%,#b08566_80%,#a08573_100%)] pb-[2px]">
        <div className="w-[7px] shrink-0 border-l border-r-2 border-l-[#3d3127] border-r-[#5a4636]" />
        <main className="flex min-w-0 flex-1 flex-col border-t border-[#4a3c30] bg-[#f0f0f0]">
          <MenuBar />
          <Toolbars />
          <div className="flex h-[258px] shrink-0 pb-[3px]">
            <MarketWatch />
            <ChartWindow />
          </div>
          <Terminal />
        </main>
      </div>
    </div>
  );
}
